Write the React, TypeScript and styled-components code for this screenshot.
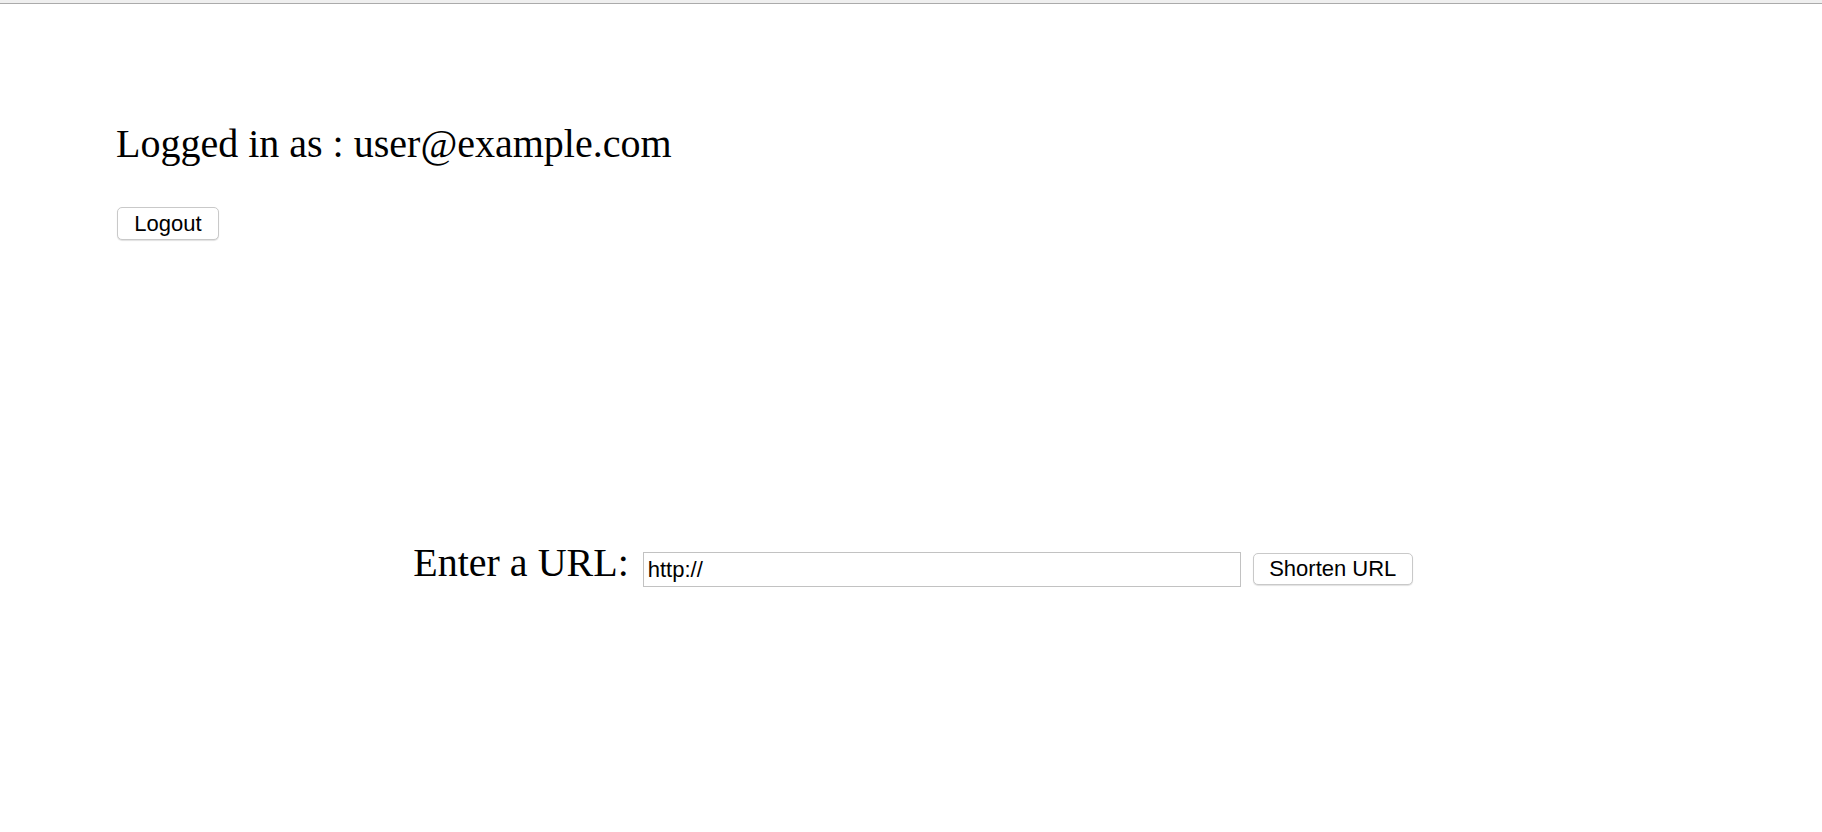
import React from "react";
import styled, { createGlobalStyle } from "styled-components";

const GlobalStyle = createGlobalStyle`
  html, body {
    margin: 0;
    padding: 0;
    background: #ffffff;
  }
  body {
    font-family: "Liberation Serif", "Times New Roman", serif;
    color: #000000;
  }
`;

const TopBar = styled.div`
  height: 3px;
  background: #efefef;
  border-bottom: 1px solid #ababab;
`;

const Header = styled.header`
  display: flex;
  flex-direction: column;
  align-items: flex-start;
  padding: 117px 0 0 116px;
`;

const Greeting = styled.h1`
  margin: 0;
  font-family: "Liberation Serif", "Times New Roman", serif;
  font-weight: normal;
  font-size: 40px;
  line-height: 46px;
`;

const Button = styled.button<{ $width: number; $height: number }>`
  box-sizing: border-box;
  width: ${(p) => p.$width}px;
  height: ${(p) => p.$height}px;
  padding: 0;
  background: #ffffff;
  border: 1px solid #c9c9c9;
  border-radius: 5px;
  box-shadow: 0 1px 1px rgba(0, 0, 0, 0.12);
  font-family: "Liberation Sans", Arial, Helvetica, sans-serif;
  font-size: 22px;
  color: #000000;
  cursor: pointer;
`;

const LogoutButton = styled(Button)`
  margin: 40px 0 0 1px;
`;

const ShortenButton = styled(Button)`
  margin-top: 13px;
`;

const UrlForm = styled.form`
  display: flex;
  justify-content: center;
  align-items: flex-start;
  margin-top: 300px;
  padding-left: 4px;
`;

const Label = styled.label`
  font-family: "Liberation Serif", "Times New Roman", serif;
  font-size: 40px;
  line-height: 46px;
  margin-right: 14px;
`;

const UrlInput = styled.input`
  box-sizing: border-box;
  width: 598px;
  height: 35px;
  margin: 12px 12px 0 0;
  padding: 0 4px;
  border: 1px solid #c2c2c2;
  border-radius: 0;
  outline: none;
  font-family: "Liberation Sans", Arial, Helvetica, sans-serif;
  font-size: 22px;
  color: #000000;
`;

export default function App() {
  return (
    <>
      <GlobalStyle />
      <TopBar />
      <Header>
        <Greeting>Logged in as : user@example.com</Greeting>
        <LogoutButton type="button" $width={102} $height={33}>
          Logout
        </LogoutButton>
      </Header>
      <UrlForm onSubmit={(e) => e.preventDefault()}>
        <Label htmlFor="url">Enter a URL:</Label>
        <UrlInput id="url" type="text" defaultValue="http://" />
        <ShortenButton type="submit" $width={160} $height={32}>
          Shorten URL
        </ShortenButton>
      </UrlForm>
    </>
  );
}
